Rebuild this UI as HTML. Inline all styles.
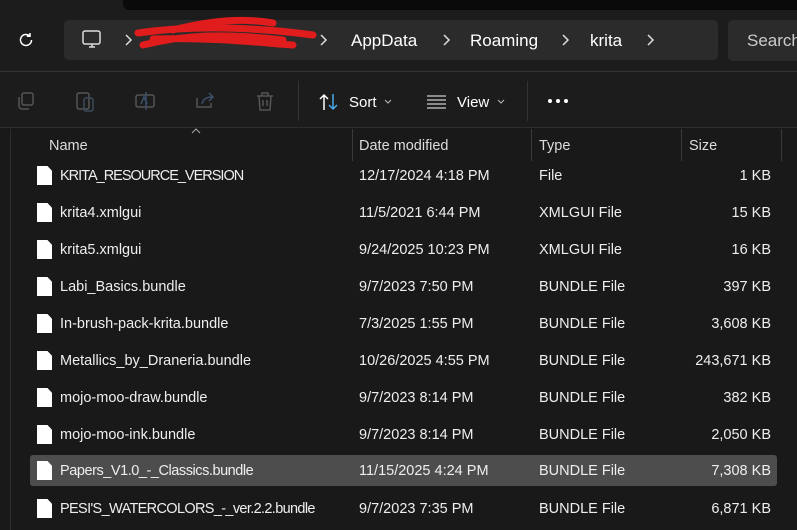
<!DOCTYPE html>
<html><head><style>
*{margin:0;padding:0;box-sizing:border-box}
body{width:797px;height:530px;overflow:hidden;background:#191919;font-family:"Liberation Sans",sans-serif;color:#fff;position:relative}
.top{position:absolute;left:0;top:0;width:797px;height:71px;background:#1c1c1c}
.blk{position:absolute;left:123px;top:0;width:674px;height:10px;background:#0a0a0a;border-radius:0 0 0 6px}
.crumb{position:absolute;left:64px;top:20px;width:654px;height:40px;background:#2b2b2b;border-radius:5px}
.search{position:absolute;left:728px;top:20px;width:80px;height:41px;background:#2b2b2b;border-radius:5px}
.t{position:absolute;font-size:17px;white-space:nowrap}
.ch{position:absolute;top:33px}
.tb{position:absolute;left:0;top:71px;width:797px;height:57px;background:#1c1c1c;border-top:1px solid #333;border-bottom:1px solid #2e2e2e}
.lb{position:absolute;left:10px;top:129px;width:1px;height:401px;background:#2e2e2e}
.hdr{position:absolute;font-size:14.5px;color:#ddd;top:138px}
.sep{position:absolute;top:129px;width:1px;height:32px;background:#3a3a3a}
.row{position:absolute;left:30px;width:747px;height:31px;font-size:14.5px;color:#eee}
.row span{position:absolute;top:8px;white-space:nowrap}
.row .ic{position:absolute;left:7px;top:6px;width:15px;height:19px;background:#fff;clip-path:polygon(0 0,70% 0,100% 25%,100% 100%,0 100%)}
.sel{background:#4d4d4d;border-radius:3px}
</style></head><body>
<div class="top"></div>
<div class="blk"></div>
<svg style="position:absolute;left:17px;top:31px" width="18" height="18" viewBox="0 0 18 18"><path d="M14.5 9a5.5 5.5 0 1 1-1.8-4.1M13 2v3.2h-3.2" fill="none" stroke="#fff" stroke-width="1.5"/></svg>
<div class="crumb"></div>
<div class="search"></div>
<svg style="position:absolute;left:81px;top:29px" width="22" height="21" viewBox="0 0 22 21"><rect x="2" y="2" width="17" height="13" rx="2" fill="none" stroke="#ddd" stroke-width="1.5"/><path d="M8 18h6M11 15v3" stroke="#ddd" stroke-width="1.5"/></svg>
<svg class="ch" style="left:124px" width="10" height="14"><path d="M2 2l5 5-5 5" fill="none" stroke="#ddd" stroke-width="1.5"/></svg>
<svg style="position:absolute;left:133px;top:15px" width="185" height="40" viewBox="0 0 185 40"><path d="M5 18 C60 10 120 12 180 20 M10 30 C50 20 90 18 150 25 M40 15 C80 5 110 3 140 8 M20 24 C80 22 130 28 160 30" stroke="#e01c1c" stroke-width="7" fill="none" stroke-linecap="round"/></svg>
<svg class="ch" style="left:319px" width="10" height="14"><path d="M2 2l5 5-5 5" fill="none" stroke="#ddd" stroke-width="1.5"/></svg>
<div class="t" style="left:351px;top:31px">AppData</div>
<svg class="ch" style="left:442px" width="10" height="14"><path d="M2 2l5 5-5 5" fill="none" stroke="#ddd" stroke-width="1.5"/></svg>
<div class="t" style="left:470px;top:31px">Roaming</div>
<svg class="ch" style="left:561px" width="10" height="14"><path d="M2 2l5 5-5 5" fill="none" stroke="#ddd" stroke-width="1.5"/></svg>
<div class="t" style="left:590px;top:31px">krita</div>
<svg class="ch" style="left:646px" width="10" height="14"><path d="M2 2l5 5-5 5" fill="none" stroke="#ddd" stroke-width="1.5"/></svg>
<div class="t" style="left:747px;top:31px;color:#ccc">Search</div>
<div class="tb"></div>
<svg style="position:absolute;left:15px;top:90px" width="22" height="22" viewBox="0 0 22 22" fill="none" stroke="#555" stroke-width="1.5"><rect x="7" y="3" width="11" height="12" rx="2"/><path d="M4 7v9a3 3 0 0 0 3 3h7" /></svg>
<svg style="position:absolute;left:74px;top:89px" width="24" height="24" viewBox="0 0 24 24" fill="none" stroke="#555" stroke-width="1.5"><rect x="3" y="4" width="12" height="16" rx="2"/><rect x="10" y="9" width="9" height="13" rx="2" stroke="#3b4a5a"/></svg>
<svg style="position:absolute;left:133px;top:89px" width="24" height="24" viewBox="0 0 24 24" fill="none" stroke="#555" stroke-width="1.5"><rect x="3" y="6" width="18" height="12" rx="2"/><path d="M8 15l3-7 3 7M13 3v18" stroke="#3b5068"/></svg>
<svg style="position:absolute;left:193px;top:89px" width="24" height="24" viewBox="0 0 24 24" fill="none" stroke="#555" stroke-width="1.5"><path d="M4 9v9h14v-4"/><path d="M9 15c1-5 5-7 10-7M16 4l4 4-4 4" stroke="#3b5068"/></svg>
<svg style="position:absolute;left:253px;top:89px" width="24" height="24" viewBox="0 0 24 24" fill="none" stroke="#555" stroke-width="1.5"><path d="M4 7h16M9 7V4h6v3M6 7l1 14h10l1-14M10 11v6M14 11v6"/></svg>
<div style="position:absolute;left:298px;top:81px;width:1px;height:40px;background:#333"></div>
<svg style="position:absolute;left:318px;top:92px" width="22" height="20" viewBox="0 0 22 20" fill="none" stroke-width="1.5"><path d="M6 18V3M2 7l4-4 4 4" stroke="#fff"/><path d="M15 2v15M11 13l4 4 4-4" stroke="#4aa8ec"/></svg>
<div class="t" style="left:349px;top:94px;font-size:15px">Sort</div>
<svg style="position:absolute;left:384px;top:99px" width="8" height="5"><path d="M1 1l3 3 3-3" fill="none" stroke="#bbb"/></svg>
<svg style="position:absolute;left:426px;top:94px" width="22" height="16"><path d="M1 2h19M1 6h19M1 10h19M1 14h19" stroke="#ccc" stroke-width="1.2"/></svg>
<div class="t" style="left:457px;top:94px;font-size:15px">View</div>
<svg style="position:absolute;left:497px;top:99px" width="8" height="5"><path d="M1 1l3 3 3-3" fill="none" stroke="#bbb"/></svg>
<div style="position:absolute;left:527px;top:81px;width:1px;height:40px;background:#333"></div>
<svg style="position:absolute;left:547px;top:98px" width="24" height="6"><circle cx="3" cy="3" r="2" fill="#fff"/><circle cx="11" cy="3" r="2" fill="#fff"/><circle cx="19" cy="3" r="2" fill="#fff"/></svg>
<div class="lb"></div>
<svg style="position:absolute;left:191px;top:128px" width="10" height="6"><path d="M1 5l4-4 4 4" fill="none" stroke="#aaa"/></svg>
<div class="hdr" style="left:49px">Name</div>
<div class="sep" style="left:352px"></div>
<div class="hdr" style="left:359px">Date modified</div>
<div class="sep" style="left:531px"></div>
<div class="hdr" style="left:539px">Type</div>
<div class="sep" style="left:681px"></div>
<div class="hdr" style="left:689px">Size</div>
<div class="sep" style="left:781px"></div>

<div class="row" style="top:160px"><i class="ic"></i><span style="left:30px;letter-spacing:-1px">KRITA_RESOURCE_VERSION</span><span style="left:329px">12/17/2024 4:18 PM</span><span style="left:509px">File</span><span style="right:6px">1 KB</span></div>
<div class="row" style="top:197px"><i class="ic"></i><span style="left:30px">krita4.xmlgui</span><span style="left:329px">11/5/2021 6:44 PM</span><span style="left:509px">XMLGUI File</span><span style="right:6px">15 KB</span></div>
<div class="row" style="top:234px"><i class="ic"></i><span style="left:30px">krita5.xmlgui</span><span style="left:329px">9/24/2025 10:23 PM</span><span style="left:509px">XMLGUI File</span><span style="right:6px">16 KB</span></div>
<div class="row" style="top:271px"><i class="ic"></i><span style="left:30px">Labi_Basics.bundle</span><span style="left:329px">9/7/2023 7:50 PM</span><span style="left:509px">BUNDLE File</span><span style="right:6px">397 KB</span></div>
<div class="row" style="top:308px"><i class="ic"></i><span style="left:30px">In-brush-pack-krita.bundle</span><span style="left:329px">7/3/2025 1:55 PM</span><span style="left:509px">BUNDLE File</span><span style="right:6px">3,608 KB</span></div>
<div class="row" style="top:345px"><i class="ic"></i><span style="left:30px">Metallics_by_Draneria.bundle</span><span style="left:329px">10/26/2025 4:55 PM</span><span style="left:509px">BUNDLE File</span><span style="right:6px">243,671 KB</span></div>
<div class="row" style="top:382px"><i class="ic"></i><span style="left:30px">mojo-moo-draw.bundle</span><span style="left:329px">9/7/2023 8:14 PM</span><span style="left:509px">BUNDLE File</span><span style="right:6px">382 KB</span></div>
<div class="row" style="top:419px"><i class="ic"></i><span style="left:30px">mojo-moo-ink.bundle</span><span style="left:329px">9/7/2023 8:14 PM</span><span style="left:509px">BUNDLE File</span><span style="right:6px">2,050 KB</span></div>
<div class="row sel" style="top:455px"><i class="ic"></i><span style="left:30px;letter-spacing:-0.45px">Papers_V1.0_-_Classics.bundle</span><span style="left:329px">11/15/2025 4:24 PM</span><span style="left:509px">BUNDLE File</span><span style="right:6px">7,308 KB</span></div>
<div class="row" style="top:493px"><i class="ic"></i><span style="left:30px;letter-spacing:-0.65px">PESI'S_WATERCOLORS_-_ver.2.2.bundle</span><span style="left:329px">9/7/2023 7:35 PM</span><span style="left:509px">BUNDLE File</span><span style="right:6px">6,871 KB</span></div>
</body></html>
